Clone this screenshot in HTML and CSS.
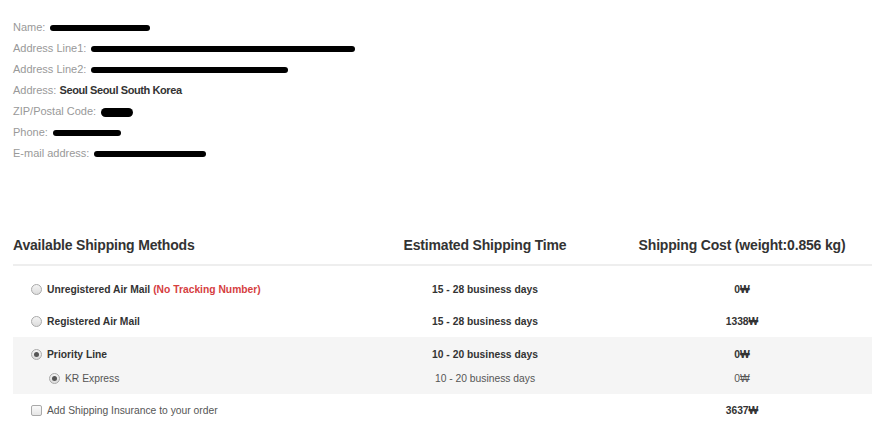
FILE: index.html
```html
<!DOCTYPE html>
<html lang="en">
<head>
    <meta charset="UTF-8">
    <title>Shipping</title>
    <link rel="stylesheet" href="styles.css">
</head>
<body>
    <div class="info">
        <p><span class="label">Name:</span> <span class="mask" style="width:100px"></span></p>
        <p><span class="label">Address Line1:</span> <span class="mask" style="width:264px"></span></p>
        <p><span class="label">Address Line2:</span> <span class="mask" style="width:197px"></span></p>
        <p><span class="label">Address:</span> <b>Seoul Seoul South Korea</b></p>
        <p><span class="label">ZIP/Postal Code:</span> <span class="mask tall" style="width:32px"></span></p>
        <p><span class="label">Phone:</span> <span class="mask" style="width:68px"></span></p>
        <p><span class="label">E-mail address:</span> <span class="mask" style="width:112px"></span></p>
    </div>

    <div class="ship">
        <div class="row head">
            <div class="c1">Available Shipping Methods</div>
            <div class="c2">Estimated Shipping Time</div>
            <div class="c3">Shipping Cost (weight:0.856 kg)</div>
        </div>

        <div class="list">
            <div class="row">
                <div class="c1"><span class="radio"></span>Unregistered Air Mail <span class="red">(No Tracking Number)</span></div>
                <div class="c2">15 - 28 business days</div>
                <div class="c3">0₩</div>
            </div>
            <div class="row">
                <div class="c1"><span class="radio"></span>Registered Air Mail</div>
                <div class="c2">15 - 28 business days</div>
                <div class="c3">1338₩</div>
            </div>
            <div class="group">
                <div class="row">
                    <div class="c1"><span class="radio on"></span>Priority Line</div>
                    <div class="c2">10 - 20 business days</div>
                    <div class="c3">0₩</div>
                </div>
                <div class="row sub">
                    <div class="c1"><span class="radio on"></span>KR Express</div>
                    <div class="c2">10 - 20 business days</div>
                    <div class="c3">0₩</div>
                </div>
            </div>
            <div class="row">
                <div class="c1 plain"><span class="check"></span>Add Shipping Insurance to your order</div>
                <div class="c2"></div>
                <div class="c3">3637₩</div>
            </div>
        </div>
    </div>
</body>
</html>
```

FILE: styles.css
```css
*{
    margin:0;
    padding:0;
    box-sizing:border-box;
}

body{
    font-family:"Liberation Sans", Arial, sans-serif;
    font-size:11px;
    color:#333;
    background:#fff;
    padding:17px 3px 0 13px;
}

.info p{
    height:21px;
    line-height:21px;
    white-space:nowrap;
}

.info .label{
    color:#999;
}

.info b{
    color:#333;
    letter-spacing:-0.4px;
}

.mask{
    display:inline-block;
    height:6px;
    background:#000;
    border-radius:4px;
    vertical-align:middle;
    margin-left:2px;
}

.mask.tall{
    height:9px;
    border-radius:5px;
}

.ship{
    margin-top:63px;
}

.row{
    display:grid;
    grid-template-columns:342px 260px 1fr;
    align-items:center;
    height:32px;
    font-weight:bold;
    font-size:10.3px;
}

.row .c2,
.row .c3{
    text-align:center;
}

.row .c3{
    padding-right:3px;
}

.head{
    height:39px;
    font-size:14px;
    letter-spacing:-0.18px;
    color:#333;
    border-bottom:2px solid #eee;
    padding-bottom:1px;
}

.list{
    padding-top:7px;
}

.list .c1{
    display:flex;
    align-items:center;
    padding-left:18px;
}

.red{
    color:#d6403f;
    margin-left:3px;
}

.group{
    background:#f5f5f5;
    padding:5px 0 4px;
}

.group .row{
    height:24px;
}

.row.sub{
    font-weight:normal;
    color:#555;
}

.row.sub .c1{
    padding-left:36px;
}

.c1.plain{
    font-weight:normal;
    color:#555;
}

.radio,
.check{
    display:inline-block;
    width:11px;
    height:11px;
    margin-right:5px;
    border:1px solid #a9a9a9;
    background:linear-gradient(#f4f4f4, #dcdcdc);
}

.radio{
    border-radius:50%;
    position:relative;
}

.radio.on::after{
    content:"";
    position:absolute;
    left:2px;
    top:2px;
    width:5px;
    height:5px;
    border-radius:50%;
    background:#555;
}

.check{
    border-radius:2px;
    background:linear-gradient(#fafafa, #e6e6e6);
}
```
